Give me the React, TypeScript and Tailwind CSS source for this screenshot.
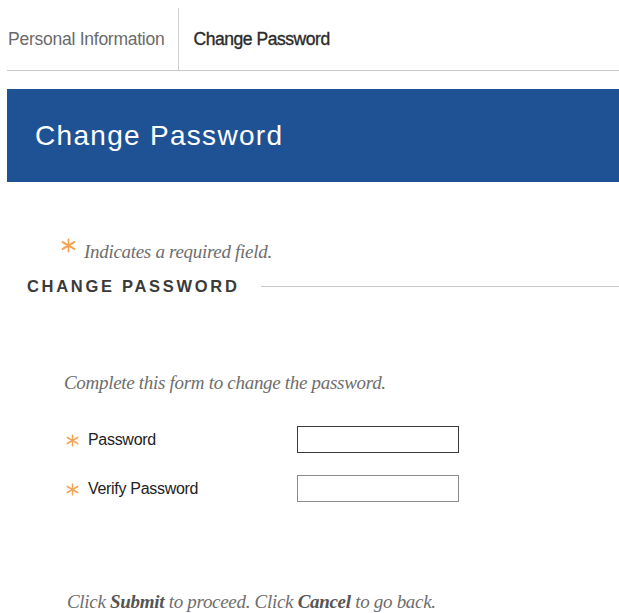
const serif = "font-['Liberation_Serif',Georgia,serif] italic";

function RequiredMark({ w = 15, h = 13 }: { w?: number; h?: number }) {
  return (
    <svg width={w} height={h} viewBox="0 0 20 15" preserveAspectRatio="none" className="shrink-0">
      <g stroke="#f2a354" strokeWidth="2" strokeLinecap="round">
        <line x1="10" y1="1.5" x2="10" y2="13.5" />
        <line x1="3" y1="4" x2="17" y2="11" />
        <line x1="3" y1="11" x2="17" y2="4" />
      </g>
    </svg>
  );
}

function FieldRow({ label, dark }: { label: string; dark?: boolean }) {
  return (
    <div className="flex items-start pl-[65px]">
      <div className="mt-[8px]">
        <RequiredMark />
      </div>
      <label className="ml-[8px] mt-[4px] w-[209px] text-[16px] leading-[20px] tracking-[-0.3px] text-[#222]">
        {label}
      </label>
      <input
        type="password"
        className={`h-[27px] w-[162px] border bg-white px-1 outline-none ${
          dark ? "border-[#3b3b3b]" : "border-[#8c8c8c]"
        }`}
      />
    </div>
  );
}

export default function App() {
  return (
    <div className="h-[613px] w-full overflow-hidden bg-white font-['Liberation_Sans',Arial,sans-serif]">
      <div className="pl-[7px]">
        {/* tab strip */}
        <div className="flex border-b border-[#c9c9c9] pt-[8px] text-[17.5px] tracking-[-0.25px]">
          <div className="flex h-[62px] items-center border-r border-[#d0d0d0] pl-[1px] pr-[14px] text-[#6a6a6a]">
            Personal Information
          </div>
          <div className="flex h-[62px] items-center pl-[14px] tracking-[-0.45px] text-[#2b2b2b] [-webkit-text-stroke:0.35px_#2b2b2b]">
            Change Password
          </div>
        </div>

        {/* page title bar */}
        <div className="mt-[18px] flex h-[93px] items-center bg-[#1f5294] pl-[28px]">
          <h1 className="text-[28px] leading-none tracking-[1.3px] text-white">Change Password</h1>
        </div>
      </div>

      <div className={`mt-[58px] flex items-start pl-[60px] text-[19px] leading-[24px] tracking-[-0.3px] text-[#6e6e6e] ${serif}`}>
        <div className="-mt-[2px]">
          <RequiredMark w={17} h={15} />
        </div>
        <span className="ml-[7px]">Indicates a required field.</span>
      </div>

      {/* section heading with rule */}
      <div className="mt-[12px] flex items-center pl-[27px]">
        <h2 className="text-[16.5px] font-bold leading-[20px] tracking-[2.7px] text-[#3a3a3a]">CHANGE PASSWORD</h2>
        <div className="ml-[21px] h-px flex-1 bg-[#c9c9c9]" />
      </div>

      <p className={`mt-[75px] pl-[64px] text-[19px] leading-[24px] tracking-[-0.3px] text-[#6e6e6e] ${serif}`}>
        Complete this form to change the password.
      </p>

      <div className="mt-[31px] flex flex-col gap-[22px]">
        <FieldRow label="Password" dark />
        <FieldRow label="Verify Password" />
      </div>

      <p className={`mt-[88px] pl-[67px] text-[19px] leading-[24px] tracking-[-0.3px] text-[#6e6e6e] ${serif}`}>
        Click <b className="text-[#555]">Submit</b> to proceed. Click <b className="text-[#555]">Cancel</b> to go back.
      </p>
    </div>
  );
}
